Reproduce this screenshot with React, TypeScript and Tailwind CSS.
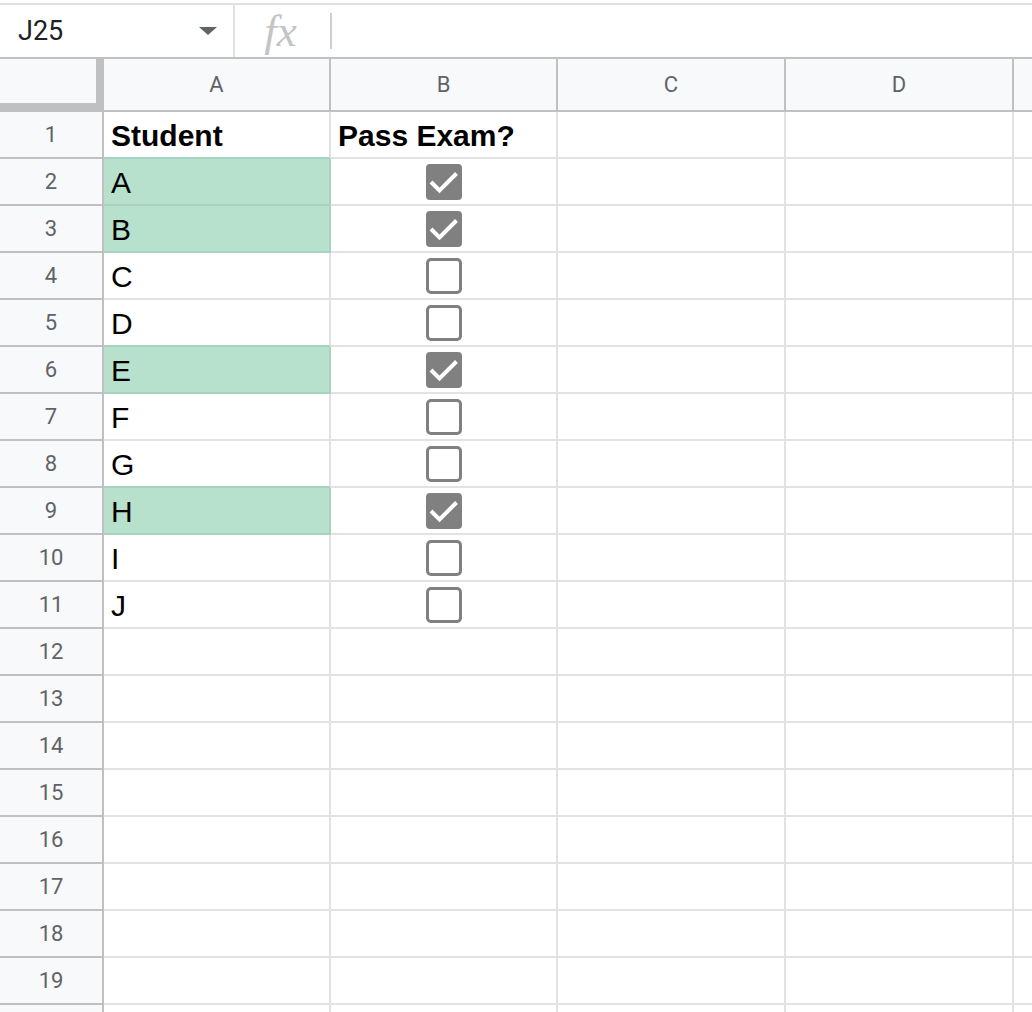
import { Fragment } from "react";

interface Student {
  name: string
  passed: boolean
}

const students: Student[] = [
  { name: "A", passed: true },
  { name: "B", passed: true },
  { name: "C", passed: false },
  { name: "D", passed: false },
  { name: "E", passed: true },
  { name: "F", passed: false },
  { name: "G", passed: false },
  { name: "H", passed: true },
  { name: "I", passed: false },
  { name: "J", passed: false },
];

const columns = [
  { key: "A", width: "w-[227px]" },
  { key: "B", width: "w-[227px]" },
  { key: "C", width: "w-[228px]" },
  { key: "D", width: "w-[228px]" },
];

const TOTAL_ROWS = 19;

const Checkbox = ({ checked }: { checked: boolean }) =>
  checked ? (
    <svg width="36" height="36" viewBox="0 0 36 36">
      <rect x="0" y="0" width="36" height="36" rx="4" fill="#808080" />
      <polyline points="5,18 13.5,26.5 30.5,9.5" fill="none" stroke="#fff" strokeWidth="4" />
    </svg>
  ) : (
    <svg width="36" height="36" viewBox="0 0 36 36">
      <rect x="1.5" y="1.5" width="33" height="33" rx="3.5" fill="#fff" stroke="#808080" strokeWidth="3" />
    </svg>
  );

const App = () => {
  // row 1 is the header row, rows 2..11 hold students
  const studentAt = (row: number) => students[row - 2];
  const isGreen = (row: number) => !!studentAt(row)?.passed;

  return (
    <div className="h-[1012px] w-[1032px] overflow-hidden bg-white font-['Liberation_Sans',Arial,sans-serif]">
      {/* Formula bar */}
      <div className="h-[3px]" />
      <div className="h-[2px] bg-[#e1e1e1]" />
      <div className="flex h-[52px] items-center">
        <div className="flex h-full w-[233px] items-center justify-between pl-[18px] pr-[16px]">
          <span className="font-['Roboto',sans-serif] text-[27px] text-[#202124]">J25</span>
          <span className="h-0 w-0 border-x-[9px] border-t-[8px] border-x-transparent border-t-[#5f6368]" />
        </div>
        <div className="h-full w-[2px] bg-[#e3e3e3]" />
        <div className="flex w-[95px] items-center justify-center">
          <span className="pr-[4px] font-['Liberation_Serif',serif] text-[45px] italic leading-none text-[#c4c4c4]">fx</span>
        </div>
        <div className="h-[36px] w-[2px] bg-[#cfcfcf]" />
      </div>

      {/* Column headers */}
      <div className="flex h-[55px] border-y-2 border-[#c0c0c0] bg-[#f8f9fa]">
        <div className="-mb-[2px] h-[53px] w-[104px] shrink-0 border-b-[9px] border-r-[8px] border-[#c0c0c0]" />
        {columns.map((col) => (
          <div
            key={col.key}
            className={`${col.width} flex shrink-0 items-center justify-center border-r-2 border-[#c0c0c0] font-['Roboto',sans-serif] text-[22px] text-[#5f6368]`}
          >
            {col.key}
          </div>
        ))}
        <div className="flex-1" />
      </div>

      {/* Rows */}
      {Array.from({ length: TOTAL_ROWS }, (_, i) => i + 1).map((row) => {
        const student = studentAt(row);
        const green = isGreen(row);
        const greenBelow = isGreen(row + 1);
        return (
          <div key={row} className="flex h-[47px]">
            <div className="flex w-[104px] shrink-0 items-center justify-center border-b-2 border-r-2 border-[#c0c0c0] bg-[#f8f9fa] font-['Roboto',sans-serif] text-[22px] text-[#5f6368]">
              {row}
            </div>
            {columns.map((col) => {
              let content = null;
              let cellClass = "border-[#e2e2e2]";
              if (col.key === "A") {
                if (row === 1) content = <span className="font-bold">Student</span>;
                else if (student) content = student.name;
                if (green) cellClass = "border-[#a6d3bd] bg-[#b7e1cd]";
                else if (greenBelow) cellClass = "border-b-[#a6d3bd] border-r-[#e2e2e2]";
              }
              if (col.key === "B") {
                if (row === 1) content = <span className="font-bold">Pass Exam?</span>;
                else if (student)
                  return (
                    <div key={col.key} className={`${col.width} flex shrink-0 items-center justify-center border-b-2 border-r-2 border-[#e2e2e2]`}>
                      <Checkbox checked={student.passed} />
                    </div>
                  );
              }
              return (
                <div
                  key={col.key}
                  className={`${col.width} shrink-0 border-b-2 border-r-2 ${cellClass} pl-[7px] pt-[7px] text-[30px] leading-[34px] text-black`}
                >
                  {content && <Fragment>{content}</Fragment>}
                </div>
              );
            })}
            <div className="flex-1 border-b-2 border-[#e2e2e2]" />
          </div>
        );
      })}

      {/* next row, only its top edge shows */}
      <div className="flex h-[47px]">
        <div className="w-[104px] shrink-0 border-r-2 border-[#c0c0c0] bg-[#f8f9fa]" />
        {columns.map((col) => (
          <div key={col.key} className={`${col.width} shrink-0 border-r-2 border-[#e2e2e2]`} />
        ))}
        <div className="flex-1" />
      </div>
    </div>
  );
};

export default App;
